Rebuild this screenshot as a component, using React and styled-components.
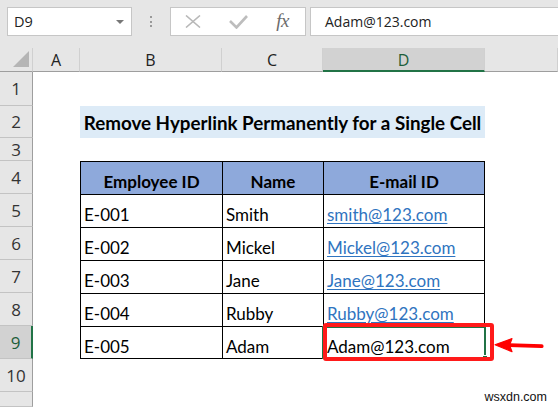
import React from 'react'
import styled, { createGlobalStyle } from 'styled-components'

const rows = [
  { id: 'E-001', name: 'Smith', mail: 'smith@123.com', link: true },
  { id: 'E-002', name: 'Mickel', mail: 'Mickel@123.com', link: true },
  { id: 'E-003', name: 'Jane', mail: 'Jane@123.com', link: true },
  { id: 'E-004', name: 'Rubby', mail: 'Rubby@123.com', link: true },
  { id: 'E-005', name: 'Adam', mail: 'Adam@123.com', link: false },
]

const columns = ['A', 'B', 'C', 'D', '']

const App = () => {
  return (
    <>
      <GlobalStyle />
      <Page>
        <Toolbar>
          <NameBox>
            <span>D9</span>
            <Caret />
          </NameBox>
          <Grip>
            <Dot />
            <Dot />
            <Dot />
          </Grip>
          <FxButtons>
            <FxBtn>
              <svg width="16" height="13" viewBox="0 0 16 13">
                <path d="M1 0.5 L15 12.5 M15 0.5 L1 12.5" stroke="#b8b8b8" strokeWidth="1.6" fill="none" />
              </svg>
            </FxBtn>
            <FxBtn>
              <svg width="19" height="14" viewBox="0 0 19 14">
                <path d="M1 6 L7.5 12.5 L18 1" stroke="#bdbdbd" strokeWidth="2.6" fill="none" />
              </svg>
            </FxBtn>
            <FxBtn>
              <FxText>fx</FxText>
            </FxBtn>
          </FxButtons>
          <FormulaInput>Adam@123.com</FormulaInput>
        </Toolbar>

        <Sheet>
          <Corner>
            <svg width="16" height="16" viewBox="0 0 16 16">
              <path d="M16 0 L16 16 L0 16 Z" fill="#b5b5b5" />
            </svg>
          </Corner>
          {columns.map((c, i) => (
            <ColHead key={i} $active={c === 'D'}>{c}</ColHead>
          ))}

          {/* row 1 */}
          <RowHead>1</RowHead>
          <Blank /><Blank /><Blank /><Blank /><Blank />

          {/* row 2 */}
          <RowHead>2</RowHead>
          <Blank />
          <TitleCell>Remove Hyperlink Permanently for a Single Cell</TitleCell>
          <Blank />

          {/* row 3 */}
          <RowHead>3</RowHead>
          <Blank /><Blank /><Blank /><Blank /><Blank />

          {/* row 4 */}
          <RowHead>4</RowHead>
          <Blank />
          <TCell $head>Employee ID</TCell>
          <TCell $head>Name</TCell>
          <TCell $head $last>E-mail ID</TCell>
          <Blank />

          {rows.map((r, i) => {
            const bottom = i === rows.length - 1
            return (
              <React.Fragment key={r.id}>
                <RowHead $active={!r.link}>{i + 5}</RowHead>
                <Blank />
                <TCell $bottom={bottom}>{r.id}</TCell>
                <TCell $bottom={bottom}>{r.name}</TCell>
                <TCell $bottom={bottom} $last>
                  {r.link ? <Link>{r.mail}</Link> : r.mail}
                  {!r.link && (
                    <>
                      <Selection><Handle /></Selection>
                      <RedBox />
                      <Arrow width="50" height="16" viewBox="0 0 50 16">
                        <path d="M15 7.2 L47.7 8.2" stroke="#f00" strokeWidth="3.8" strokeLinecap="round" fill="none" />
                        <path d="M1 6.8 L18 0.6 L15.5 7.2 L18 13.6 Z" fill="#f00" stroke="#f00" strokeWidth="1.2" strokeLinejoin="round" />
                      </Arrow>
                    </>
                  )}
                </TCell>
                <Blank />
              </React.Fragment>
            )
          })}

          {/* row 10 */}
          <RowHead>10</RowHead>
          <Blank /><Blank /><Blank /><Blank /><Blank />

          <RowHead />
          <Blank /><Blank /><Blank /><Blank /><Blank />
        </Sheet>

        <Watermark>wsxdn.com</Watermark>
      </Page>
    </>
  )
}

export default App

const GlobalStyle = createGlobalStyle`
  html, body {
    margin: 0;
    padding: 0;
    background: #fff;
    overflow: hidden;
  }
  * {
    box-sizing: border-box;
  }
`
const Page = styled.div`
  position: relative;
  width: 558px;
  height: 407px;
  overflow: hidden;
  background: #fff;
  font-family: "Open Sans", "Noto Sans", sans-serif;
`
const Toolbar = styled.div`
  display: flex;
  align-items: flex-start;
  height: 48px;
  padding: 7px 0 0 7px;
  background: #e6e6e6;
`
const NameBox = styled.div`
  display: flex;
  align-items: center;
  justify-content: space-between;
  width: 125px;
  height: 29px;
  padding: 0 7px 0 6px;
  background: #fff;
  border: 1px solid #c6c6c6;
  font-size: 14.5px;
  color: #222;
`
const Caret = styled.div`
  width: 0;
  height: 0;
  border-left: 4px solid transparent;
  border-right: 4px solid transparent;
  border-top: 4px solid #777;
`
const Grip = styled.div`
  display: flex;
  flex-direction: column;
  align-items: center;
  justify-content: center;
  gap: 2.5px;
  width: 38px;
  height: 29px;
`
const Dot = styled.div`
  width: 2px;
  height: 2px;
  background: #999;
`
const FxButtons = styled.div`
  display: flex;
  width: 136px;
  height: 29px;
  background: #fff;
  border: 1px solid #c6c6c6;
`
const FxBtn = styled.div`
  display: flex;
  align-items: center;
  justify-content: center;
  width: 45px;
  height: 100%;
`
const FxText = styled.span`
  font-family: "Liberation Serif", "DejaVu Serif", serif;
  font-style: italic;
  font-size: 19px;
  color: #6b6b6b;
  letter-spacing: -0.5px;
  margin-top: -2px;
`
const FormulaInput = styled.div`
  display: flex;
  align-items: center;
  flex: 1;
  height: 29px;
  margin-left: 4px;
  padding-left: 14px;
  background: #fff;
  border: 1px solid #c6c6c6;
  border-right: none;
  font-size: 14px;
  color: #222;
`
const Sheet = styled.div`
  display: grid;
  grid-template-columns: 33px 47px 142px 101px 162px 1fr;
  grid-template-rows: 24px 34px 32px 23px repeat(7, 33px) 1fr;
  height: 359px;
`
const Corner = styled.div`
  display: flex;
  align-items: flex-end;
  justify-content: flex-end;
  padding: 0 3px 4px 0;
  background: #e6e6e6;
  border-right: 1px solid #d0d0d0;
  border-bottom: 1px solid #9e9e9e;
`
const ColHead = styled.div`
  display: flex;
  align-items: center;
  justify-content: center;
  background: ${p => (p.$active ? '#d2d2d2' : '#e6e6e6')};
  border-right: 1px solid #d0d0d0;
  border-bottom: ${p => (p.$active ? '2px solid #217346' : '1px solid #9e9e9e')};
  color: ${p => (p.$active ? '#1d5e3a' : '#222')};
  font-size: 16px;
  padding-top: ${p => (p.$active ? '1px' : '0')};
`
const RowHead = styled.div`
  display: flex;
  align-items: center;
  justify-content: center;
  background: ${p => (p.$active ? '#d2d2d2' : '#e6e6e6')};
  border-right: ${p => (p.$active ? '2px solid #217346' : '1px solid #9e9e9e')};
  border-bottom: 1px solid #c3c3c3;
  color: ${p => (p.$active ? '#1d5e3a' : '#333')};
  font-size: 17px;
`
const Blank = styled.div``

const Cell = styled.div`
  position: relative;
  display: flex;
  align-items: flex-end;
  padding: 0 3px 2px;
  font-family: Lato, "Open Sans", sans-serif;
  font-size: 17px;
  line-height: 20px;
  color: #000;
  white-space: nowrap;
`
const TCell = styled(Cell)`
  justify-content: ${p => (p.$head ? 'center' : 'flex-start')};
  font-weight: ${p => (p.$head ? 700 : 400)};
  background: ${p => (p.$head ? '#8ea9db' : '#fff')};
  border-left: 1px solid #000;
  border-top: 1px solid #000;
  border-right: ${p => (p.$last ? '1px solid #000' : 'none')};
  border-bottom: ${p => (p.$bottom ? '1px solid #000' : 'none')};
  padding-bottom: ${p => (p.$bottom ? '1px' : '2px')};
`
const TitleCell = styled(Cell)`
  grid-column: span 3;
  align-items: center;
  justify-content: center;
  padding: 1px 0 0;
  background: #ddebf7;
  font-size: 18.8px;
  font-weight: 700;
`
const Link = styled.span`
  color: #2f74c0;
  text-decoration: underline;
  text-underline-offset: 2px;
`
const Selection = styled.div`
  position: absolute;
  top: -1px;
  right: -2px;
  bottom: -1px;
  left: -2px;
  border: 2px solid #217346;
  z-index: 1;
`
const Handle = styled.div`
  position: absolute;
  right: -4px;
  bottom: -4px;
  width: 6px;
  height: 6px;
  background: #217346;
  border: 1px solid #fff;
`
const RedBox = styled.div`
  position: absolute;
  left: -1px;
  top: -4px;
  width: 171px;
  height: 38px;
  border: 4px solid #ff1a1a;
  border-radius: 3px;
  z-index: 2;
`
const Arrow = styled.svg`
  position: absolute;
  left: 170px;
  top: 11px;
  z-index: 2;
  overflow: visible;
`
const Watermark = styled.div`
  position: absolute;
  right: 11px;
  bottom: 3px;
  font-family: "Liberation Sans", Arial, sans-serif;
  font-size: 12.5px;
  color: #111;
`
